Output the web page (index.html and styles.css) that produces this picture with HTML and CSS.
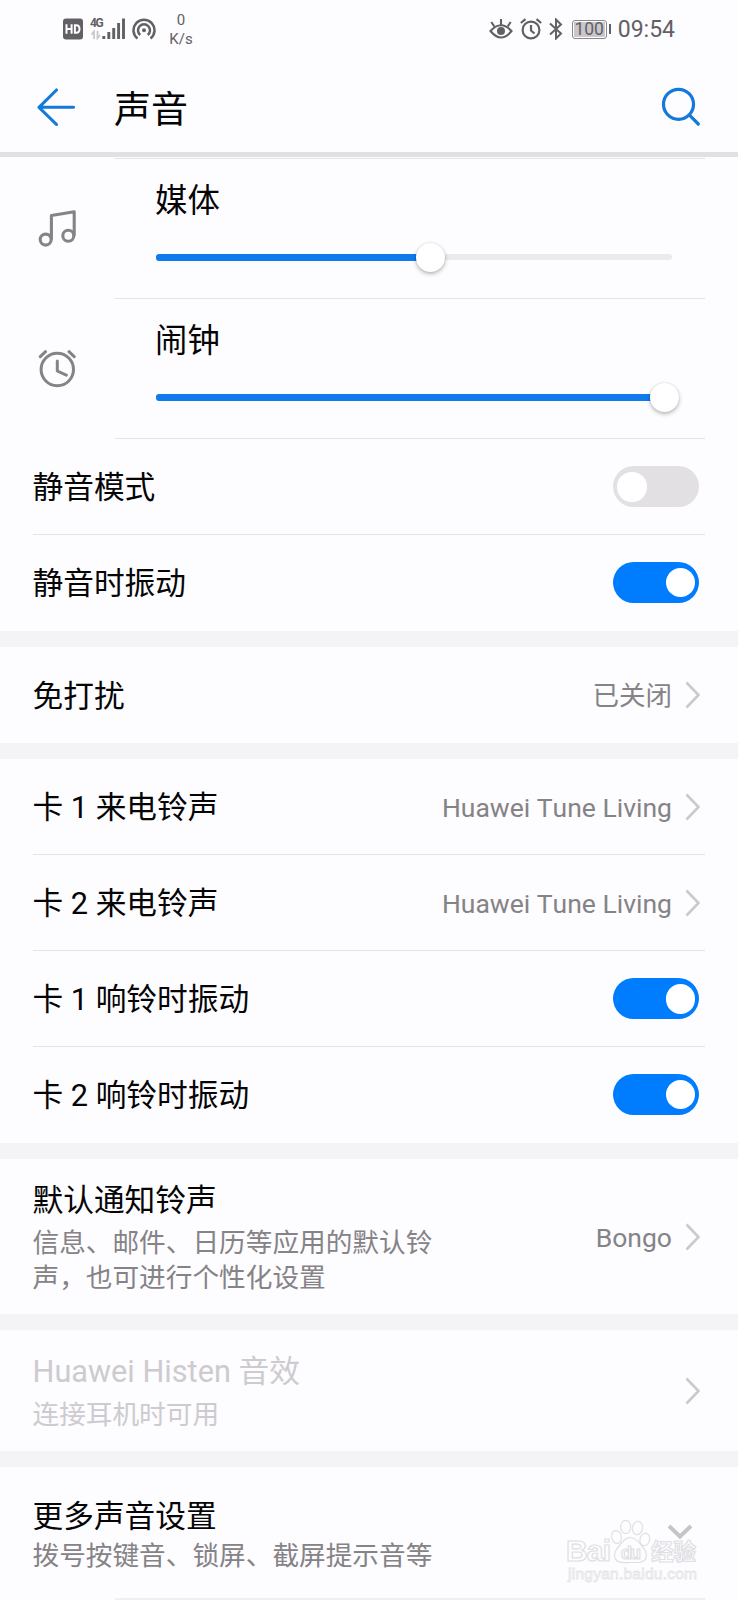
FILE: index.html
```html
<!DOCTYPE html>
<html lang="zh-CN">
<head>
<meta charset="utf-8">
<title>声音</title>
<link rel="stylesheet" href="styles.css">
</head>
<body>
<div class="screen">
  <div class="status">
    <div class="status-left">
      <svg class="ic-hd" width="20" height="22" viewBox="0 0 20 22"><rect x="0" y="0.5" width="20" height="21" rx="3" fill="#626064"/><path d="M3.500 6.200v9.600M8.600 6.200v9.600M3.500 11h5M11.900 6.200v9.600M11.900 7.200h1.400q3.200 0 3.200 3.800t-3.200 3.800h-1.400" fill="none" stroke="#fdfcff" stroke-width="2"/></svg>
      <div class="net">
        <span class="net-type">4G</span>
        <svg width="12" height="10" viewBox="0 0 12 10"><path d="M4 9V1.500L1.500 4.500M7.500 1v7l2.500-3" fill="none" stroke="#c9c7cb" stroke-width="1.800"/></svg>
      </div>
      <svg class="ic-bars" width="24" height="22" viewBox="0 0 24 22"><path d="M1.800 18v3M6.800 14v7M11.700 10v11M16.600 5v16M21.500 .500v20.500" stroke="#626064" stroke-width="2.900" fill="none"/></svg>
      <svg class="ic-hot" width="24" height="24" viewBox="0 0 24 24"><g fill="none" stroke="#626064" stroke-width="2.500"><path d="M5.500 20.500A10.500 10.500 0 1 1 18.500 20.500"/><path d="M8.200 17A6 6 0 1 1 15.800 17"/></g><circle cx="12" cy="12.300" r="2" fill="#626064"/></svg>
      <div class="speed"><span>0</span><span>K/s</span></div>
    </div>
    <div class="status-right">
      <svg class="ic-eye" width="24" height="22" viewBox="0 0 24 22"><g fill="none" stroke="#626064" stroke-width="2.100"><path d="M1.500 13Q12 1.500 22.500 13Q12 26 1.500 13Z"/><path d="M12 7V1M5.300 8.500L2.300 4M18.700 8.500L21.700 4"/></g><circle cx="12" cy="12.900" r="4" fill="#626064"/></svg>
      <svg class="ic-alarm-s" width="22" height="22" viewBox="0 0 22 22"><g fill="none" stroke="#626064" stroke-width="2.200"><circle cx="11" cy="12" r="8.400"/><path d="M11 7v5.500l3.500 3M.800 5L5.500 1.200M16.500 1.200L21.200 5"/></g></svg>
      <svg class="ic-bt" width="14" height="22" viewBox="0 0 14 22"><path d="M1 5.500L12 15.500L7 20.500V1.500L12 6.500L1 16.500" fill="none" stroke="#626064" stroke-width="2"/></svg>
      <div class="battery"><span>100</span></div>
      <span class="time">09:54</span>
    </div>
  </div>
  <header class="bar">
    <svg class="ic-back" width="38" height="38" viewBox="0 0 38 38"><path d="M19.500 2L2 19.300L19.500 36.500M2 19.300H36.500" fill="none" stroke="#147ad9" stroke-width="3.100" stroke-linecap="round" stroke-linejoin="round"/></svg>
    <h1>声音</h1>
    <svg class="ic-search" width="40" height="40" viewBox="0 0 40 40"><g fill="none" stroke="#147ad9" stroke-width="3.200" stroke-linecap="round"><circle cx="17.500" cy="17.300" r="15"/><path d="M28.500 28.200L37.300 37"/></g></svg>
  </header>

  <section class="volumes">
    <div class="volume">
      <svg class="vol-icon" width="38" height="40" viewBox="38 209 38 40"><g fill="none" stroke="#858386" stroke-width="3.100" stroke-linejoin="round"><circle cx="45.700" cy="239.600" r="5.500"/><circle cx="68.300" cy="235.700" r="5.500"/><path d="M51.400 239.600V215.500L74.200 211.700V235.700"/></g></svg>
      <div class="vol-main">
        <div class="vol-name">媒体</div>
        <div class="slider"><div class="fill" style="width:275px"></div><div class="thumb"></div><div class="rest"></div></div>
      </div>
    </div>
    <div class="volume">
      <svg class="vol-icon" width="38" height="40" viewBox="38 349 38 40"><g fill="none" stroke="#858386" stroke-width="3" stroke-linecap="round" stroke-linejoin="round"><circle cx="57.300" cy="369.500" r="16.200"/><path d="M57.300 361v10l9 4.200M40.300 356.700l5.200-5M69 351.700l5.200 5"/></g></svg>
      <div class="vol-main">
        <div class="vol-name">闹钟</div>
        <div class="slider"><div class="fill" style="width:509px"></div><div class="thumb"></div><div class="rest"></div></div>
      </div>
    </div>
  </section>

  <section class="group first">
    <div class="row"><span class="label">静音模式</span><span class="switch"></span></div>
    <div class="row tall"><span class="label">静音时振动</span><span class="switch on"></span></div>
  </section>

  <section class="group">
    <div class="row"><span class="label">免打扰</span><span class="value">已关闭</span><svg class="chev" width="16" height="28" viewBox="0 0 16 28"><path d="M1.500 1.500L13.500 14L1.500 26.500"/></svg></div>
  </section>

  <section class="group">
    <div class="row short"><span class="label">卡 1 来电铃声</span><span class="value">Huawei Tune Living</span><svg class="chev" width="16" height="28" viewBox="0 0 16 28"><path d="M1.500 1.500L13.500 14L1.500 26.500"/></svg></div>
    <div class="row"><span class="label">卡 2 来电铃声</span><span class="value">Huawei Tune Living</span><svg class="chev" width="16" height="28" viewBox="0 0 16 28"><path d="M1.500 1.500L13.500 14L1.500 26.500"/></svg></div>
    <div class="row"><span class="label">卡 1 响铃时振动</span><span class="switch on"></span></div>
    <div class="row tall"><span class="label">卡 2 响铃时振动</span><span class="switch on"></span></div>
  </section>

  <section class="group">
    <div class="row notify">
      <div class="text"><div class="label">默认通知铃声</div><div class="sub">信息、邮件、日历等应用的默认铃<br>声，也可进行个性化设置</div></div>
      <span class="value">Bongo</span><svg class="chev" width="16" height="28" viewBox="0 0 16 28"><path d="M1.500 1.500L13.500 14L1.500 26.500"/></svg>
    </div>
  </section>

  <section class="group">
    <div class="row histen">
      <div class="text"><div class="label">Huawei Histen 音效</div><div class="sub">连接耳机时可用</div></div>
      <svg class="chev" width="16" height="28" viewBox="0 0 16 28"><path d="M1.500 1.500L13.500 14L1.500 26.500"/></svg>
    </div>
  </section>

  <section class="group">
    <div class="row more">
      <div class="text"><div class="label">更多声音设置</div><div class="sub">拨号按键音、锁屏、截屏提示音等</div></div>
      <svg class="down" width="26" height="16" viewBox="0 0 26 16"><path d="M2 2L13 12.500L24 2" fill="none" stroke="#c6c4c8" stroke-width="4"/></svg>
    </div>
  </section>

  <svg class="watermark" width="140" height="68" viewBox="562 1516 140 68">
    <g fill="#fefdff" stroke="#dcdadf" stroke-width="1.200">
      <ellipse cx="616.500" cy="1537" rx="4.800" ry="6.500" transform="rotate(-12 616.500 1537)"/>
      <ellipse cx="625.700" cy="1527" rx="5" ry="6.700"/>
      <ellipse cx="637.500" cy="1528" rx="5" ry="6.700" transform="rotate(10 637.500 1528)"/>
      <ellipse cx="644.800" cy="1539.500" rx="4.800" ry="6.300" transform="rotate(14 644.800 1539.500)"/>
      <path d="M630 1537.500C635 1537.500 638 1541 641 1545C645 1549 647.500 1553 646 1558C644 1563 638 1562.500 630.500 1562.500C623 1562.500 617 1563.500 615 1558C613.500 1553 616 1549 620 1545C623 1541 625.500 1537.500 630 1537.500Z"/>
      <text class="wm-bai" x="566" y="1561" textLength="45">Bai</text>
      <text class="wm-du" x="621" y="1559" textLength="20">du</text>
      <text class="wm-cn" x="651" y="1560" textLength="45">经验</text>
    </g>
    <text class="wm-url" x="568" y="1578.500" textLength="129" fill="#fefdff" stroke="#e2e0e4" stroke-width=".800">jingyan.baidu.com</text>
  </svg>
</div>
</body>
</html>
```
FILE: styles.css
```css
* { box-sizing: border-box; }
body {
  margin: 0;
  background: #fdfcff;
  color: #050506;
  font-family: Roboto, "Noto Sans CJK SC", sans-serif;
  font-kerning: none;
}
svg { display: block; flex: none; }
.screen {
  position: relative;
  width: 738px;
  height: 1600px;
  overflow: hidden;
  background: #fdfcff;
}

/* status bar */
.status {
  display: flex;
  justify-content: space-between;
  height: 60px;
  padding: 0 63px 0 63px;
  color: #626064;
}
.status-left, .status-right { display: flex; align-items: flex-start; }
.ic-hd { margin-top: 18px; }
.net { width: 12px; margin: 17px 0 0 7px; }
.net-type {
  display: block;
  height: 13px;
  font: bold 12px/12px Roboto, sans-serif;
  letter-spacing: -1.5px;
}
.ic-bars { margin-top: 18px; }
.ic-hot { margin: 18px 0 0 6px; }
.speed {
  display: flex;
  flex-direction: column;
  align-items: center;
  width: 26px;
  margin: 11px 0 0 12px;
  font-size: 15px;
  line-height: 19px;
}
.ic-eye { margin-top: 18px; }
.ic-alarm-s { margin: 18px 0 0 7px; }
.ic-bt { margin: 18px 0 0 7px; }
.battery {
  position: relative;
  width: 35px;
  height: 19px;
  margin: 20px 11px 0 9px;
  border: 1.5px solid #8a888c;
  border-radius: 3px;
  padding: 1px;
}
.battery span {
  display: block;
  height: 15px;
  background: #c9c7cb;
  font-size: 17.5px;
  line-height: 15px;
  text-align: center;
}
.battery::after {
  content: "";
  position: absolute;
  left: 36px;
  top: 3px;
  width: 2.5px;
  height: 10px;
  background: #626064;
}
.time { margin-top: 16px; font-size: 23px; line-height: 27px; }

/* title bar */
.bar {
  display: flex;
  align-items: flex-start;
  height: 97px;
  padding: 0 37px;
  border-bottom: 5px solid #e2e0e3;
}
.ic-back { margin-top: 28px; }
.bar h1 {
  flex: 1;
  margin: 29px 0 0 39px;
  font-size: 37px;
  font-weight: 400;
  line-height: 44px;
}
.ic-search { margin-top: 27px; }

/* volume sliders */
.volumes { padding-top: 1px; }
.volume { display: flex; height: 140px; padding-right: 33px; }
.vol-icon { margin: 51px 39px 0 38px; }
.vol-main {
  flex: 1;
  border-top: 1px solid #e4e2e6;
  padding: 22px 33px 0 41px;
}
.vol-name { margin-left: -1px; font-size: 32.4px; line-height: 40px; }
.slider { display: flex; align-items: center; height: 30px; margin-top: 21px; }
.fill { flex: none; height: 7px; border-radius: 3px 0 0 3px; background: #0f7bec; }
.thumb {
  flex: none;
  width: 29px;
  height: 29px;
  margin: 0 -15px;
  border-radius: 50%;
  background: #fff;
  box-shadow: 0 2px 4px rgba(0, 0, 0, .27), 0 0 2px rgba(0, 0, 0, .12);
  z-index: 1;
}
.rest { flex: 1; height: 6px; border-radius: 0 3px 3px 0; background: #ebeaed; }

/* grouped settings */
.group { border-top: 16px solid #f4f3f5; }
.group.first { border-top: 0; }
.row {
  display: flex;
  align-items: center;
  height: 96px;
  margin: 0 33px;
  padding-right: 4px;
}
.row + .row { border-top: 1px solid #e4e2e6; }
.row.tall { height: 97px; padding-bottom: 2px; }
.row.short { height: 95px; }
.first .row:first-child {
  border-top: 1px solid #e4e2e6;
  margin-left: 115px;
}
.label {
  flex: 1;
  margin-left: -.5px;
  padding-top: 3px;
  font-size: 30.7px;
  line-height: 38px;
}
.first .row:first-child .label { margin-left: -82.5px; }
.value {
  margin-right: 13px;
  padding-top: 2px;
  color: #858386;
  font-size: 26.5px;
  line-height: 34px;
}
.chev { fill: none; stroke: #cbc9cd; stroke-width: 2.6; }
.switch {
  width: 86px;
  height: 41px;
  margin-right: 2px;
  padding: 6px 4px;
  border-radius: 21px;
  background: #e2e0e3;
  display: flex;
}
.switch::before {
  content: "";
  width: 29.5px;
  height: 29.5px;
  border-radius: 50%;
  background: #fff;
}
.switch.on { justify-content: flex-end; background: #007dff; }
.text { flex: 1; align-self: flex-start; }
.sub {
  margin-left: -.5px;
  color: #858386;
  font-size: 26.67px;
  line-height: 35px;
}
.notify { height: 155px; }
.notify .text { padding-top: 20px; }
.notify .sub { padding-top: 6px; }
.histen { height: 121px; }
.histen .text { padding-top: 20px; }
.histen .sub { padding-top: 7px; }
.histen .label, .histen .sub { color: #cdcbcf; }
.more {
  height: 133px;
  position: relative;
}
.more .text { padding-top: 28px; }
.more .sub { padding-top: 3px; }
.more .down { margin: 0 8px 4px 0; }
.more::after {
  content: "";
  position: absolute;
  left: 82px;
  right: 0;
  bottom: 0;
  height: 2px;
  background: #f0eff1;
}

/* watermark over the last row */
.watermark { position: absolute; left: 562px; top: 1516px; opacity: .85; }
.watermark text { font-family: "Liberation Sans", "Noto Sans CJK SC", sans-serif; }
.watermark .wm-bai { font-size: 30px; font-weight: 700; }
.watermark .wm-du { font-size: 18px; font-weight: 700; }
.watermark .wm-cn { font-size: 22.5px; font-weight: 700; }
.watermark .wm-url { font-size: 15.5px; }
```
